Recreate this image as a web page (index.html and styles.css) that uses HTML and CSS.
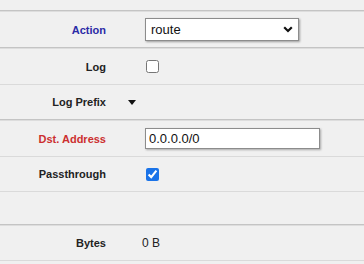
FILE: index.html
```html
<!DOCTYPE html>
<html>
<head>
<title>Rule</title>
<link rel="stylesheet" href="styles.css">
</head>
<body>
<div class="rule_form">
<div class="top"></div>
<div class="row sep">
<div class="label action">Action</div>
<div></div>
<div class="value">
<div class="select-wrap">
<select>
<option>route</option>
</select>
<svg class="chev" width="10" height="7" viewBox="0 0 10 7"><path d="M1.2 1.3 5 5 8.8 1.3" fill="none" stroke="#111" stroke-width="2.2"/></svg>
</div>
</div>
</div>
<div class="row sep">
<div class="label">Log</div>
<div></div>
<div class="value"><input type="checkbox"></div>
</div>
<div class="row">
<div class="label">Log Prefix</div>
<div class="toggle"><span class="tri"></span></div>
<div class="value"></div>
</div>
<div class="row sep">
<div class="label required">Dst. Address</div>
<div></div>
<div class="value"><input type="text" class="text" value="0.0.0.0/0"></div>
</div>
<div class="row">
<div class="label">Passthrough</div>
<div></div>
<div class="value"><input type="checkbox" checked></div>
</div>
<div class="row empty"></div>
<div class="row sep last">
<div class="label">Bytes</div>
<div></div>
<div class="value plain">0 B</div>
</div>
</div>
</body>
</html>
```
FILE: styles.css
```css
*{
  box-sizing: border-box;
}
html, body {
  margin: 0;
  background-color: #f0f0f0;
}
body {
  font-family: "Liberation Sans", Arial, sans-serif;
  color: #222;
}
.top {
  height: 10px;
}
.row {
  display: grid;
  grid-template-columns: 106px 36px 1fr;
  align-items: center;
  height: 35px;
  border-top: 1px solid #dadada;
}
.row.sep {
  height: 37px;
  border-top: 1px solid #c4c4c4;
  box-shadow: inset 0 1px 0 #dddddd;
  padding-top: 1px;
}
.row.empty {
  height: 33px;
}
.row.last {
  border-bottom: 1px solid #dadada;
}
.label {
  text-align: right;
  font-size: 11px;
  font-weight: bold;
  color: #222;
}
.label.action {
  color: #2b2ba6;
}
.label.required {
  color: #cc2f2f;
}
.toggle {
  padding-left: 22px;
  display: flex;
  align-items: center;
}
.tri {
  width: 0;
  height: 0;
  border-left: 4.5px solid transparent;
  border-right: 4.5px solid transparent;
  border-top: 5px solid #111;
}
.value {
  display: flex;
  align-items: center;
  font-size: 12px;
}
.value input[type=checkbox] {
  margin: 3px 3px 3px 4px;
  width: 13px;
  height: 13px;
  accent-color: #1a73e8;
}
.select-wrap {
  position: relative;
  margin-left: 3px;
}
.select-wrap select {
  appearance: none;
  -webkit-appearance: none;
  width: 154px;
  height: 23px;
  padding: 0 20px 0 5px;
  border: 1px solid #8c8c8c;
  border-radius: 0;
  background-color: #fff;
  box-shadow: 1px 1px 2px rgba(0,0,0,0.35);
  font-family: "Liberation Sans", Arial, sans-serif;
  font-size: 13px;
  color: #111;
}
.chev {
  position: absolute;
  right: 6px;
  top: 8px;
}
.text {
  margin-left: 3px;
  width: 175px;
  height: 21px;
  padding: 0 3px;
  border: 1px solid #8c8c8c;
  background-color: #fff;
  box-shadow: 1px 1px 2px rgba(0,0,0,0.3);
  font-family: "Liberation Sans", Arial, sans-serif;
  font-size: 13px;
  color: #111;
}
.plain {
  color: #222;
}
```
